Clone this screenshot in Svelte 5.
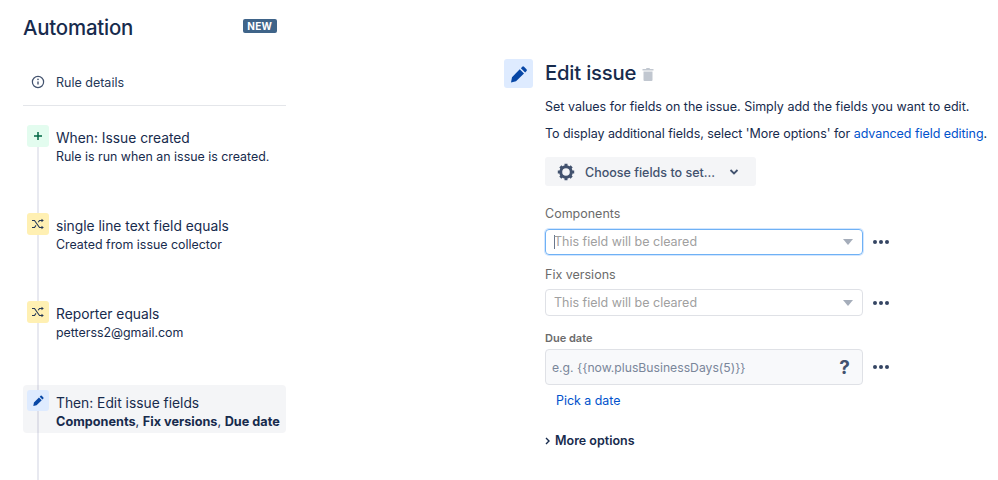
<script lang="ts">
  const steps = [
    { kind: 'when', title: 'When: Issue created', sub: 'Rule is run when an issue is created.' },
    { kind: 'cond', title: 'single line text field equals', sub: 'Created from issue collector' },
    { kind: 'cond', title: 'Reporter equals', sub: 'petterss2@gmail.com' }
  ]
</script>

{#snippet pencil(size)}
  <svg width={size} height={size} viewBox="0 0 16 16" fill="#0747a6">
    <path d="M10.6 2.200a1 1 0 0 1 1.400 0l2 2a1 1 0 0 1 0 1.400L12.900 6.700 9.500 3.300zM8.600 4.200l3.400 3.400-6.400 6.200-4 .9.800-4.100z" />
  </svg>
{/snippet}

{#snippet shuffle()}
  <svg width="14" height="14" viewBox="0 0 14 14" fill="none" stroke="#253858" stroke-width="1.100">
    <path d="M1 3.500h2.500l5 7H11M1 10.500h2.500l1.500-2.100M7.200 5.300l1.300-1.800H11" />
    <path d="M10.500 1.800 12.800 3.500 10.500 5.200zM10.500 8.800l2.300 1.700-2.300 1.700z" fill="#253858" stroke="none" />
  </svg>
{/snippet}

{#snippet more()}
  <button class="more" aria-label="More"><i></i><i></i><i></i></button>
{/snippet}

{#snippet caret()}
  <svg class="caret" width="10" height="6" viewBox="0 0 10 6"><path d="M0 0h10L5 6z" fill="#a5adba" /></svg>
{/snippet}

<div class="page">
  <aside class="side">
    <header class="side-head">
      <h1>Automation</h1>
      <span class="badge">NEW</span>
    </header>

    <div class="details">
      <svg width="14" height="14" viewBox="0 0 14 14" fill="none" stroke="#42526e" stroke-width="1.200">
        <circle cx="7" cy="7" r="5.600" />
        <path d="M7 6.400v3.200" stroke-width="1.400" />
        <circle cx="7" cy="4.400" r=".8" fill="#42526e" stroke="none" />
      </svg>
      <span>Rule details</span>
    </div>

    <div class="steps">
      {#each steps as step}
        <div class="step">
          <span class="ico {step.kind}">
            {#if step.kind === 'when'}
              <svg width="10" height="10" viewBox="0 0 10 10"><path d="M5 1v8M1 5h8" stroke="#006644" stroke-width="1.500" /></svg>
            {:else}
              {@render shuffle()}
            {/if}
          </span>
          <div>
            <div class="step-title">{step.title}</div>
            <div class="step-sub">{step.sub}</div>
          </div>
        </div>
      {/each}

      <div class="step active">
        <span class="ico edit">{@render pencil(13)}</span>
        <div>
          <div class="step-title">Then: Edit issue fields</div>
          <div class="step-sub"><b>Components</b>, <b>Fix versions</b>, <b>Due date</b></div>
        </div>
      </div>
    </div>
  </aside>

  <main class="main">
    <div class="main-head">
      <span class="big-ico">{@render pencil(20)}</span>
      <h2>Edit issue</h2>
      <svg class="trash" width="12" height="13" viewBox="0 0 12 13" fill="#c1c7d0">
        <path d="M4.500 0h3l.5 1h3.500v1.500H.5V1H4zM1.500 3.500h9V12a1 1 0 0 1-1 1h-7a1 1 0 0 1-1-1z" />
      </svg>
    </div>

    <p class="line first">Set values for fields on the issue. Simply add the fields you want to edit.</p>
    <p class="line second">To display additional fields, select 'More options' for <a href="#top">advanced field editing</a>.</p>

    <button class="choose">
      <svg width="18" height="18" viewBox="0 0 18 18" fill="none">
        <circle cx="9" cy="9" r="5.300" stroke="#42526e" stroke-width="3" />
        <path d="M7.500 .8h3v3h-3zM7.500 14.200h3v3h-3zM.8 7.500h3v3h-3zM14.200 7.500h3v3h-3zM2.300 4.400l2.100-2.100 2 2-2.100 2.100zM11.600 13.700l2.100-2.100 2 2-2.100 2.100zM13.700 2.300l2 2.100-2 2-2.100-2.100zM4.400 11.600l2 2.100-2.100 2-2-2.100z" fill="#42526e" />
      </svg>
      <span>Choose fields to set...</span>
      <svg class="chev" width="10" height="6" viewBox="0 0 10 6" fill="none"><path d="M1.500 1 5 4.500 8.500 1" stroke="#42526e" stroke-width="1.800" /></svg>
    </button>

    <label class="lbl comp" for="f1">Components</label>
    <div class="row">
      <div class="select focus" id="f1"><span class="cursor"></span><span class="ph">This field will be cleared</span>{@render caret()}</div>
      {@render more()}
    </div>

    <label class="lbl fix" for="f2">Fix versions</label>
    <div class="row after-fix">
      <div class="select" id="f2"><span class="ph">This field will be cleared</span>{@render caret()}</div>
      {@render more()}
    </div>

    <label class="lbl due" for="f3">Due date</label>
    <div class="row tight">
      <div class="date" id="f3"><span>e.g. {'{{'}now.plusBusinessDays(5){'}}'}</span><b>?</b></div>
      {@render more()}
    </div>

    <a class="pick" href="#top">Pick a date</a>

    <div class="options">
      <svg width="6" height="8" viewBox="0 0 6 8" fill="none"><path d="M1 1l3 3-3 3" stroke="#172b4d" stroke-width="1.400" /></svg>
      <span>More options</span>
    </div>
  </main>
</div>

<style>
  :global(body) {
    margin: 0;
    background: #fff;
  }

  .page {
    display: flex;
    width: 998px;
    height: 480px;
    overflow: hidden;
    font-family: Inter, 'Liberation Sans', sans-serif;
    color: #172b4d;
  }

  .side {
    width: 263px;
    margin-left: 23px;
    flex: none;
  }

  .side-head {
    display: flex;
    align-items: center;
    justify-content: space-between;
    height: 26px;
    margin-top: 14px;
    padding-right: 9px;
  }

  h1 {
    margin: 0;
    font-size: 20.4px;
    font-weight: 500;
    letter-spacing: -0.2px;
  }

  .badge {
    margin-top: -2px;
    padding: 0 5px 0 4.500px;
    height: 14px;
    line-height: 14px;
    border-radius: 2px;
    background: #3f6489;
    color: #fff;
    font-size: 10px;
    font-weight: 700;
    letter-spacing: 0.2px;
  }

  .details {
    display: flex;
    align-items: center;
    gap: 11px;
    box-sizing: border-box;
    height: 66px;
    padding: 19px 0 0 8px;
    font-size: 12.5px;
    color: #253858;
    border-bottom: 1px solid #e4e6ea;
  }

  .steps {
    position: relative;
    padding-top: 19px;
  }

  .steps::before {
    content: '';
    position: absolute;
    left: 14px;
    top: 30px;
    bottom: -60px;
    width: 2px;
    background: #e8e9f0;
  }

  .step {
    position: relative;
    display: flex;
    gap: 7px;
    height: 88px;
    padding-left: 4px;
    box-sizing: border-box;
  }

  .step.active {
    height: 48px;
    margin-top: -4px;
    padding-top: 5px;
    border-radius: 4px;
    background: rgba(9, 30, 66, 0.045);
  }

  .step.active .step-sub { font-size: 12.7px; }

  .step.active .ico { height: 21px; }

  .ico {
    flex: none;
    display: flex;
    align-items: center;
    justify-content: center;
    width: 22px;
    height: 22px;
    border-radius: 3px;
  }

  .when { background: #e3fcef; }
  .cond { background: #fff0b3; }
  .edit { background: #deebff; }

  .step-title {
    margin-top: 3px;
    font-size: 13.800px;
    line-height: 20px;
    color: #172b4d;
  }

  .step-sub {
    font-size: 12.4px;
    line-height: 18px;
    color: #172b4d;
  }

  .step-sub b { font-weight: 700; }

  .main {
    margin-left: 218px;
    width: 470px;
    flex: none;
    padding-top: 59px;
    box-sizing: border-box;
  }

  .main-head {
    display: flex;
    align-items: center;
    height: 29px;
  }

  .big-ico {
    display: flex;
    align-items: center;
    justify-content: center;
    width: 29px;
    height: 29px;
    border-radius: 3px;
    background: #deebff;
  }

  h2 {
    margin: -2px 6px 0 12px;
    font-size: 20.300px;
    font-weight: 500;
    letter-spacing: -0.2px;
  }

  .trash { margin-top: 1px; }

  .line {
    margin: 9px 0 0 41px;
    font-size: 12.5px;
    line-height: 18px;
    color: #172b4d;
    white-space: nowrap;
  }

  .line.first { margin-top: 10px; }
  .line.second { letter-spacing: -0.05px; }

  a {
    color: #0052cc;
    text-decoration: none;
  }

  .choose {
    display: flex;
    align-items: center;
    width: 211px;
    height: 29px;
    margin: 14px 0 0 41px;
    padding: 0 0 0 12px;
    border: 0;
    border-radius: 3px;
    background: #f4f5f7;
    font: 500 12.5px Inter, 'Liberation Sans', sans-serif;
    color: #42526e;
  }

  .choose span {
    margin-left: 10px;
    padding-top: 1px;
  }

  .chev { margin-left: 14px; }

  .lbl {
    display: block;
    margin-left: 41px;
    font-size: 12.5px;
    line-height: 16px;
    color: #6b6b6b;
  }

  .comp { margin-top: 20px; }
  .fix { margin-top: 12px; }

  .due {
    margin-top: 15px;
    font-size: 11px;
    font-weight: 600;
    line-height: 14px;
  }

  .row {
    display: flex;
    align-items: center;
    margin: 7px 0 0 41px;
  }

  .row.after-fix { margin-top: 6px; }
  .row.tight { margin-top: 4px; }

  .select {
    display: flex;
    align-items: center;
    box-sizing: border-box;
    width: 318px;
    height: 27px;
    padding: 0 8px;
    border: 1px solid #dfe1e6;
    border-radius: 4px;
  }

  .select.focus {
    height: 26px;
    border-color: #6fb1f5;
    box-shadow: 0 0 0 1px rgba(76, 154, 255, 0.25);
  }

  .select.focus .ph { margin-top: -2px; }

  .cursor {
    width: 1px;
    height: 14px;
    margin-right: -1px;
    background: #6b778c;
  }

  .ph {
    font-size: 12.5px;
    color: #a0a0a0;
  }

  .caret { margin-left: auto; margin-right: 1px; }

  .date {
    display: flex;
    align-items: center;
    justify-content: space-between;
    box-sizing: border-box;
    width: 318px;
    height: 36px;
    padding: 1px 6px 0;
    border: 1px solid #dfe1e6;
    border-radius: 4px;
    background: #f8f9fb;
    font-size: 12.2px;
    color: #7a869a;
  }

  .date b {
    margin-right: 6px;
    font-size: 19px;
    font-weight: 700;
    color: #42526e;
  }

  .more {
    display: flex;
    gap: 2px;
    margin-left: 10px;
    padding: 0;
    border: 0;
    background: none;
  }

  .more i {
    width: 4px;
    height: 4px;
    border-radius: 50%;
    background: #344563;
  }

  .pick {
    display: block;
    margin: 8px 0 0 52px;
    font-size: 12.4px;
    line-height: 16px;
  }

  .options {
    display: flex;
    align-items: center;
    gap: 4px;
    margin: 24px 0 0 41px;
    font-size: 12.5px;
    line-height: 16px;
    font-weight: 600;
  }
</style>
